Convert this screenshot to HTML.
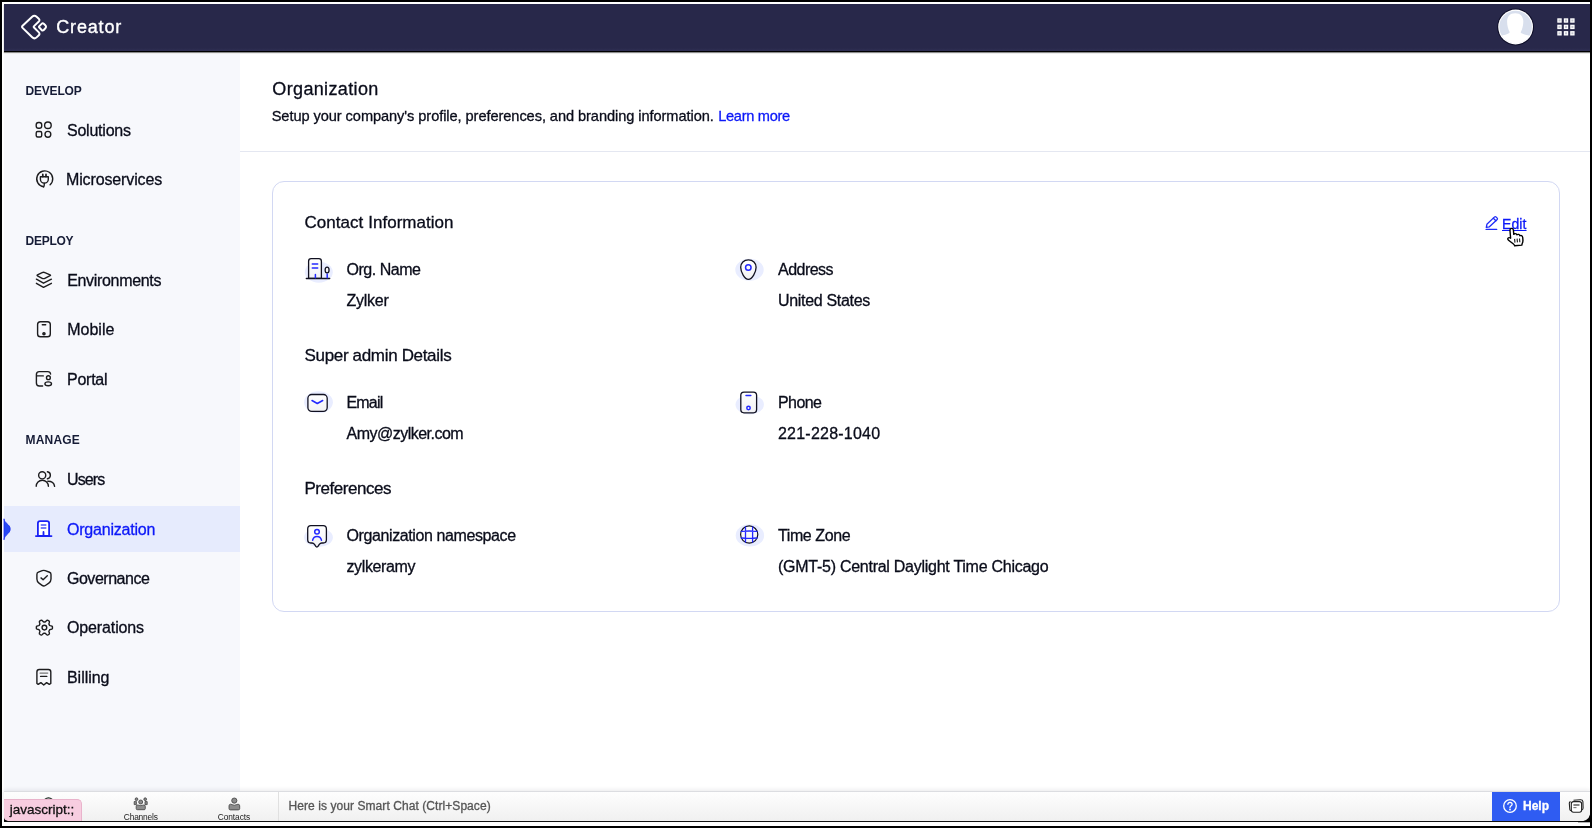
<!DOCTYPE html>
<html lang="en">
<head>
<meta charset="utf-8">
<title>Organization - Creator</title>
<style>
*{box-sizing:border-box;margin:0;padding:0}
html,body{width:1592px;height:828px;overflow:hidden;background:#000}
body{font-family:"Liberation Sans",sans-serif;color:#0d1226;position:relative}
#root{position:absolute;left:0;top:0;width:1592px;height:828px;will-change:transform}
.abs{position:absolute}
.t{position:absolute;white-space:nowrap;line-height:20px;height:20px;font-size:16px;color:#0a0c1a;-webkit-text-stroke:.3px currentColor}
#frame{left:2px;top:2px;width:1588px;height:824px;background:#fff;border-radius:0 0 10px 0}
#hdr{left:4px;top:4px;width:1586px;height:48px;background:linear-gradient(#28284a 0,#28284a 44px,#2e2e52 46.500px);border-bottom:1.300px solid #000;box-shadow:0 1px 1px rgba(0,0,0,.45)}
#side{left:4px;top:54px;width:236px;height:737px;background:#f7f8fc}
#divider{left:240px;top:151px;width:1350px;height:1px;background:#e4e7f1}
#card{left:272px;top:181px;width:1287.600px;height:431px;border:1px solid #d2d8f3;border-radius:12px;background:#fff}
.sec{font-size:12px;font-weight:bold;letter-spacing:-0.3px;color:#161c36;-webkit-text-stroke:0}
.nav{left:67px}
.h2{font-size:17px;line-height:24px;height:24px}
#active{left:4px;top:506px;width:236px;height:46px;background:#e6ebfd}
#activemark{left:4px;top:519px;width:6px;height:20px;background:#1a3cf5;border-radius:0 10px 10px 0/0 10px 10px 0}
.blue{color:#0c18f8}
#bbar{left:4px;top:791px;width:1586px;height:30px;background:linear-gradient(#fefefe,#f0f0f0);border-top:1px solid #dcdde1;box-shadow:0 -1px 4px rgba(40,40,60,.10)}
#bline{left:4px;top:821px;width:1584px;height:1px;background:#111}
#status{left:4px;top:799px;width:78px;height:22px;background:#f7cde0;border-radius:0 5px 0 0;border-top:1px solid #e9b3cb;border-right:1px solid #e9b3cb}
#help{left:1492px;top:792px;width:68px;height:29px;background:#2f5cf2}
svg{position:absolute;overflow:visible}
</style>
</head>
<body>
<div id="root">
<div class="abs" id="frame"></div>

<!-- header -->
<div class="abs" id="hdr"></div>
<div class="t" style="left:56.2px;top:15px;font-size:18px;line-height:24px;height:24px;color:#fff;letter-spacing:.85px;-webkit-text-stroke:.35px #fff">Creator</div>

<svg style="left:0;top:0" width="60" height="52" viewBox="0 0 60 52"><g fill="none" stroke="#fff" stroke-width="2" stroke-linejoin="round"><path d="M22.57 27.85Q21.5 26.8 22.59 25.77L32.17 16.76Q34.35 14.7 36.59 16.7L38.53 18.44Q40.4 20.1 38.58 21.82L34.03 26.11Q33.3 26.8 34.01 27.51L38.63 32.13Q40.4 33.9 38.55 35.58L36.57 37.38Q34.35 39.4 32.21 37.3Z"/><path d="M39.3 27.52Q38.6 26.8 39.32 26.1L41.63 23.85Q42.7 22.8 43.79 23.83L45.09 25.08Q46.9 26.8 45.13 28.57L43.76 29.94Q42.7 31 41.65 29.93Z"/></g></svg>
<svg style="left:1495px;top:7px" width="41" height="41" viewBox="0 0 41 41"><defs><clipPath id="avc"><circle cx="20.600" cy="20" r="16.300"/></clipPath></defs><circle cx="20.600" cy="20" r="18.400" fill="#0c0c26"/><circle cx="20.600" cy="20" r="17.400" fill="#fff"/><circle cx="20.600" cy="20" r="16.300" fill="#d8dfed"/><g clip-path="url(#avc)" fill="#fff"><path d="M20.200 6.300C25.500 6.300 28.300 9.800 28.300 14.500C28.300 18.500 27.300 22.600 25.600 25.200C26.600 26.800 29.500 27.400 33 28.300C36.500 29.200 38 30.500 38 33V41H3V33C3 30.500 4.500 29.200 8 28.300C11.500 27.400 13.800 26.800 14.800 25.200C13.100 22.600 12.100 18.500 12.100 14.500C12.100 9.800 14.900 6.300 20.200 6.300Z"/></g></svg>
<svg style="left:1557px;top:18px" width="18" height="19" viewBox="0 0 18 19"><g fill="#fff" stroke="#c9c9d2" stroke-width="0"><rect x="0.300" y="0.300" width="4.400" height="4.400"/><rect x="6.800" y="0.300" width="4.400" height="4.400"/><rect x="13.200" y="0.300" width="4.400" height="4.400"/><rect x="0.300" y="6.700" width="4.400" height="4.400"/><rect x="6.800" y="6.700" width="4.400" height="4.400"/><rect x="13.200" y="6.700" width="4.400" height="4.400"/><rect x="0.300" y="13.100" width="4.400" height="4.400"/><rect x="6.800" y="13.100" width="4.400" height="4.400"/><rect x="13.200" y="13.100" width="4.400" height="4.400"/></g><g fill="#c4c5cf"><rect x="1.50" y="1.50" width="2" height="2"/><rect x="8.00" y="1.50" width="2" height="2"/><rect x="14.40" y="1.50" width="2" height="2"/><rect x="1.50" y="7.90" width="2" height="2"/><rect x="8.00" y="7.90" width="2" height="2"/><rect x="14.40" y="7.90" width="2" height="2"/><rect x="1.50" y="14.30" width="2" height="2"/><rect x="8.00" y="14.30" width="2" height="2"/><rect x="14.40" y="14.30" width="2" height="2"/></g></svg>

<!-- sidebar -->
<div class="abs" id="side"></div>
<div class="abs" id="active"></div>
<svg style="left:0;top:0" width="20" height="828" viewBox="0 0 20 828"><path d="M4 518.800C4.300 523.500 10.200 524.300 10.200 529C10.200 533.900 4.300 534.700 4 539.800Z" fill="#2849f5" stroke="#1a2cf0" stroke-width=".800"/></svg>
<div class="t sec" style="left:25.5px;top:81px;letter-spacing:-.2px">DEVELOP</div>
<div class="t nav" style="top:120.8px;letter-spacing:-0.227px">Solutions</div>
<div class="t nav" style="left:66px;top:170.3px;letter-spacing:-0.13px">Microservices</div>
<div class="t sec" style="left:25.5px;top:231px;letter-spacing:-.25px">DEPLOY</div>
<div class="t nav" style="left:67.2px;top:270.8px;letter-spacing:-0.33px">Environments</div>
<div class="t nav" style="left:67.2px;top:320.3px;letter-spacing:0.02px">Mobile</div>
<div class="t nav" style="top:369.8px;letter-spacing:-0.25px">Portal</div>
<div class="t sec" style="left:25.5px;top:430.400px;letter-spacing:.2px">MANAGE</div>
<div class="t nav" style="top:470.3px;letter-spacing:-0.863px">Users</div>
<div class="t nav blue" style="top:519.8px;letter-spacing:-0.213px">Organization</div>
<div class="t nav" style="top:569.3px;letter-spacing:-0.485px">Governance</div>
<div class="t nav" style="top:618.3px;letter-spacing:-0.129px">Operations</div>
<div class="t nav" style="top:667.8px;letter-spacing:-0.05px">Billing</div>

<svg style="left:0;top:0" width="240" height="828" viewBox="0 0 240 828"><g fill="none" stroke="#1d1d1f" stroke-width="1.4" stroke-linecap="round" stroke-linejoin="round">
<rect x="36.2" y="122.500" width="5.500" height="5.800" rx="2.300"/><circle cx="47.9" cy="125.250" r="3.300"/><rect x="36.2" y="131.500" width="5.500" height="5.500" rx="1.500"/><circle cx="47.9" cy="134.300" r="2.900"/>
<path d="M43.6 186.800A8 8 0 1 1 50.1 184.800"/><path d="M40.4 176.800H48.300V179.200A3.950 3.950 0 0 1 40.400 179.200Z"/><path d="M42.800 174.400V176.600M46 174.400V176.600" stroke-width="1.700"/><path d="M44.300 183.300Q44.400 186.200 43.600 186.800"/>
<path d="M37.48 275.77Q36.6 275.3 37.5 274.87L42.15 272.65Q43.5 272 44.87 272.6L50.08 274.9Q51 275.3 50.1 275.74L44.85 278.34Q43.5 279 42.18 278.29Z"/><path d="M36.400 279.200L43.500 283.200L51.400 279.200M36.400 283.300L43.500 287.300L51.400 283.300"/>
<rect x="37.600" y="321.800" width="12.700" height="15" rx="2.800"/><path d="M42.300 324.700H45.700"/><circle cx="43.950" cy="333.700" r="1.100" fill="#555"/>
<path d="M42.600 386H39.300Q36.400 386 36.400 383.100V374.500Q36.400 371.600 39.300 371.600H47.800Q50.300 371.600 50.600 374"/><path d="M36.800 375.900H43.300"/><circle cx="48.400" cy="377.700" r="1.900"/><ellipse cx="48.200" cy="383.800" rx="3.300" ry="1.900"/>
<circle cx="42.200" cy="475.300" r="3.550"/><path d="M47.400 471.800A3.550 3.550 0 0 1 47.400 478.800"/><path d="M36.200 486.300A6.100 6.100 0 0 1 48.400 486.300"/><path d="M47.800 481.300Q54 481.300 54.600 486.300"/>
<path d="M42.21 570.69Q43.7 570.1 45.2 570.66L49.5 572.24Q51 572.8 51 574.4L51 579Q51 581.6 48.85 583.07L45.35 585.47Q43.7 586.6 42.09 585.42L38.99 583.14Q36.9 581.6 36.9 579L36.9 574.4Q36.9 572.8 38.39 572.21Z"/><path d="M41 577.900L43.100 579.700L47.300 575.800"/>
<path d="M52.45 627.6L52.43 628.13L52.38 628.65L51.88 629.09L51.02 629.37L50.15 629.55L49.62 629.76L49.47 630.1L49.29 630.43L49.1 630.74L48.88 631.04L48.96 631.6L49.24 632.44L49.43 633.34L49.3 633.99L48.87 634.29L48.42 634.57L47.96 634.82L47.48 635.04L46.85 634.83L46.17 634.22L45.58 633.55L45.14 633.2L44.77 633.24L44.4 633.25L44.03 633.24L43.66 633.2L43.22 633.55L42.63 634.22L41.95 634.83L41.32 635.04L40.84 634.82L40.38 634.57L39.93 634.29L39.5 633.99L39.37 633.34L39.56 632.44L39.84 631.6L39.92 631.04L39.7 630.74L39.51 630.43L39.33 630.1L39.18 629.76L38.65 629.55L37.78 629.37L36.92 629.09L36.42 628.65L36.37 628.13L36.35 627.6L36.37 627.07L36.42 626.55L36.92 626.11L37.78 625.83L38.65 625.65L39.18 625.44L39.33 625.1L39.51 624.77L39.7 624.46L39.92 624.16L39.84 623.6L39.56 622.76L39.37 621.86L39.5 621.21L39.93 620.91L40.37 620.63L40.84 620.38L41.32 620.16L41.95 620.37L42.63 620.98L43.22 621.65L43.66 622L44.03 621.96L44.4 621.95L44.77 621.96L45.14 622L45.58 621.65L46.17 620.98L46.85 620.37L47.48 620.16L47.96 620.38L48.42 620.63L48.87 620.91L49.3 621.21L49.43 621.86L49.24 622.76L48.96 623.6L48.88 624.16L49.1 624.46L49.29 624.77L49.47 625.1L49.62 625.44L50.15 625.65L51.02 625.83L51.88 626.11L52.38 626.55L52.43 627.07Z"/><circle cx="44.400" cy="627.600" r="2.350"/>
<path d="M36.9 683.5V671.9Q36.9 669.5 39.3 669.5H48.4Q50.8 669.5 50.8 671.9V683.5L49.3 684.4L46.6 682.6L43.75 685L40.9 682.6L38.2 684.4Z"/><path d="M40.100 673.100H47.700" stroke="#777"/><path d="M40.600 676.400H46.800"/>
</g>
<g fill="#fff" stroke="#1a22f5" stroke-width="1.800" stroke-linecap="round" stroke-linejoin="round"><path d="M37.900 536V523.300Q37.900 521.100 40.100 521.100H46.900Q49.100 521.100 49.100 523.300V536Z"/><path d="M35.900 536.100H51.500M43.500 532V536" fill="none"/><path d="M41.300 525H45.800M41.300 527.900H45.800" stroke-width="1.500" stroke="#4a55f7" fill="none"/></g>
</svg>

<!-- main -->
<div class="t" style="left:272.3px;top:77px;font-size:18px;line-height:24px;height:24px;letter-spacing:.36px">Organization</div>
<div class="t" style="left:271.700px;top:106px;font-size:14.6px;letter-spacing:-.066px">Setup your company's profile, preferences, and branding information. <span class="blue" style="letter-spacing:-.3px;margin-left:.5px">Learn more</span></div>
<div class="abs" id="divider"></div>
<div class="abs" id="card"></div>

<svg style="left:0;top:0" width="1592" height="828" viewBox="0 0 1592 828"><defs><linearGradient id="ig" x1="0" y1="0" x2="0" y2="1"><stop offset="0" stop-color="#fff"/><stop offset="1" stop-color="#f1f1f4"/></linearGradient></defs>
<g fill="#e9edff"><ellipse cx="318.800" cy="272.200" rx="14" ry="10.500"/><ellipse cx="749.500" cy="269.700" rx="14.200" ry="11"/><ellipse cx="318.500" cy="402.200" rx="14.400" ry="11"/><ellipse cx="749.700" cy="404.600" rx="14.200" ry="9.800"/><ellipse cx="318.500" cy="537.500" rx="14.400" ry="9.400"/><ellipse cx="749.900" cy="535.400" rx="14.200" ry="11.200"/></g>
<g fill="url(#ig)" stroke="#101020" stroke-width="1.300" stroke-linecap="round" stroke-linejoin="round">
<path d="M308.600 278.400V261.200Q308.600 258.700 311.100 258.700H318.900Q321.400 258.700 321.400 261.200V278.400Z"/><ellipse cx="327.100" cy="270.100" rx="1.950" ry="2.900"/><path d="M306.300 278.500H329.700" fill="none"/>
<path d="M748.400 259.800C753 259.800 756.100 263 756.100 267.300C756.100 272 752.200 279.300 748.400 279.300C744.600 279.300 740.700 272 740.700 267.300C740.700 263 743.800 259.800 748.400 259.800Z"/>
<rect x="307.900" y="394.500" width="19.300" height="16.900" rx="3.800"/>
<rect x="740.800" y="392.100" width="15.800" height="20.700" rx="3.200"/>
<path d="M310.900 525.700H323.200Q326.400 525.700 326.400 528.900V539.800Q326.400 543 323.200 543H321.800Q320.300 543 319.300 544.400Q317.800 547.100 316.900 547.100Q316 547.100 314.500 544.400Q313.500 543 312 543H310.900Q307.700 543 307.700 539.800V528.900Q307.700 525.700 310.900 525.700Z"/>
<circle cx="749.200" cy="534.550" r="8.600" stroke-width="1.200"/>
</g>
<g fill="none" stroke="#2328ff" stroke-width="1.500" stroke-linecap="round" stroke-linejoin="round">
<path d="M312.300 264.100H317.700M312.300 268H317.700M315.400 274.500V277.700M327.200 274.200V277.700"/>
<circle cx="748.300" cy="267.400" r="2.750"/>
<path d="M312 400.500L317.300 403.500L322.700 400.500"/>
<path d="M746 395.600H750.800"/><circle cx="748.500" cy="408" r="1.700"/>
<circle cx="317" cy="531.800" r="2.300"/><path d="M312.600 540.300Q313.500 536.600 317 536.600Q320.600 536.600 321.500 540.300"/>
<path d="M741.400 531.400Q749.200 530.600 757 531.400M741.400 538Q749.200 538.800 757 538M745.500 527V542M752.600 526.900V542.100" stroke-width="1.300"/>
</g>
</svg>

<div class="t h2" style="left:304.5px;top:211.4px;letter-spacing:.04px">Contact Information</div>
<div class="t" style="left:346.5px;top:260px;letter-spacing:-0.474px">Org. Name</div>
<div class="t" style="left:346.5px;top:291px;letter-spacing:-0.253px">Zylker</div>
<div class="t" style="left:778px;top:260px;letter-spacing:-0.524px">Address</div>
<div class="t" style="left:778px;top:291px;letter-spacing:-0.312px">United States</div>

<div class="t h2" style="left:304.5px;top:344.4px;letter-spacing:-.33px">Super admin Details</div>
<div class="t" style="left:346.5px;top:393px;letter-spacing:-0.820px">Email</div>
<div class="t" style="left:346.5px;top:424px;letter-spacing:-0.513px">Amy@zylker.com</div>
<div class="t" style="left:778px;top:393px;letter-spacing:-0.579px">Phone</div>
<div class="t" style="left:778px;top:424px;letter-spacing:0.221px">221-228-1040</div>

<div class="t h2" style="left:304.5px;top:477.4px;letter-spacing:-.47px">Preferences</div>
<div class="t" style="left:346.5px;top:526px;letter-spacing:-0.395px">Organization namespace</div>
<div class="t" style="left:346.5px;top:557px;letter-spacing:-0.380px">zylkeramy</div>
<div class="t" style="left:778px;top:526px;letter-spacing:-0.407px">Time Zone</div>
<div class="t" style="left:778px;top:557px;letter-spacing:-0.263px">(GMT-5) Central Daylight Time Chicago</div>

<div class="t blue" style="left:1502px;top:213.500px;font-size:14px;text-decoration:underline;text-underline-offset:.600px;text-decoration-thickness:1.200px;letter-spacing:.1px">Edit</div>
<svg style="left:0;top:0" width="1592" height="828" viewBox="0 0 1592 828"><g fill="none" stroke="#1f2bf7" stroke-width="1.300" stroke-linecap="round" stroke-linejoin="round"><path d="M1486.300 227.300L1486.900 224.300L1494.600 216.900Q1495.300 216.300 1496 216.900L1497.200 218.100Q1497.800 218.800 1497.200 219.500L1489.400 226.800Z"/><path d="M1493.300 218.200L1495.900 220.800"/><path d="M1486.100 229.400H1496.700"/></g>
<g transform="translate(1506.200,228.100) rotate(-5 5.2 0.3) scale(1.120,1.040)"><path d="M4.600 0.300C5.700 0.300 6.300 1.100 6.300 2.200V6.200C6.600 5.700 7.300 5.500 7.900 5.700C8.600 5.900 8.900 6.400 9 6.900C9.400 6.500 10.100 6.400 10.700 6.700C11.300 7 11.500 7.500 11.600 8C12 7.800 12.600 7.800 13.100 8.100C13.800 8.500 14 9.200 14 10V12.200C14 13.800 13.600 14.700 13.100 15.600C12.800 16.200 12.700 16.600 12.700 17.200H6.200C6.100 16.400 5.700 15.800 5 15.100L1.200 11.300C0.500 10.600 0.400 9.800 0.900 9.300C1.500 8.700 2.300 8.800 3 9.400L3.200 9.600V2.200C3.200 1.100 3.700 0.300 4.600 0.300Z" fill="#fff" stroke="#000" stroke-width="1.250" stroke-linejoin="round"/><path d="M6.700 10.600V14.200M8.900 10.600V14.200M11.100 10.600V14.200" stroke="#000" stroke-width=".900" fill="none"/></g></svg>


<!-- bottom bar -->
<div class="abs" id="bbar"></div>
<div class="abs" id="bline"></div>
<div class="abs" style="left:278px;top:792px;width:1px;height:29px;background:#e0e0e0"></div>
<div class="t" style="left:123.800px;top:806.600px;font-size:8.400px;letter-spacing:-.18px;color:#222;-webkit-text-stroke:0">Channels</div>
<div class="t" style="left:217.800px;top:806.600px;font-size:8.400px;letter-spacing:-.1px;color:#222;-webkit-text-stroke:0">Contacts</div>
<div class="t" style="left:288.5px;top:796px;font-size:12px;letter-spacing:.07px;color:#555">Here is your Smart Chat (Ctrl+Space)</div>
<div class="abs" id="help"></div>
<div class="t" style="left:1523px;top:796px;font-size:12px;font-weight:bold;color:#fff">Help</div>
<svg style="left:0;top:0" width="1592" height="828" viewBox="0 0 1592 828">
<circle cx="48.500" cy="802.600" r="4.700" fill="none" stroke="#1b2620" stroke-width="1.300"/>
<g fill="#8c8c8c" stroke="#3f3f3f" stroke-width=".800" stroke-linejoin="round">
<circle cx="136.500" cy="799.200" r="1.350"/><circle cx="145.200" cy="799.200" r="1.350"/>
<path d="M134.200 801.600Q135.300 801 136.400 801.500V804.600H134.200Z"/><path d="M147.200 801.600Q146.100 801 145 801.500V804.600H147.200Z"/>
<circle cx="140.700" cy="802" r="2"/>
<path d="M136.200 806.300Q136.200 805 137.500 805Q140.700 806.200 143.900 805Q145.300 805 145.300 806.300V808.600Q145.300 809.700 144.200 809.700H137.300Q136.200 809.700 136.200 808.600Z"/>
<circle cx="234.300" cy="800.600" r="2.600"/>
<path d="M229 805.900Q229 804.300 230.600 804.200Q234.300 806.300 238.100 804.200Q239.700 804.300 239.700 805.900V808.500Q239.700 809.900 238.300 809.900H230.400Q229 809.900 229 808.500Z"/>
</g></svg>
<div class="abs" id="status"></div>
<svg style="left:0;top:0" width="1592" height="828" viewBox="0 0 1592 828"><g fill="none" stroke="#fff" stroke-width="1.300" stroke-linecap="round" stroke-linejoin="round"><circle cx="1510" cy="806" r="6.300"/><path d="M1507.900 804.300Q1508 802.400 1510 802.400Q1512.100 802.500 1512.100 804.200Q1512.100 805.300 1510.900 806Q1510 806.600 1510 807.500"/></g><circle cx="1510" cy="809.500" r=".900" fill="#fff"/>
<g fill="#fff" stroke="#222" stroke-width="1.100" stroke-linejoin="round"><path d="M1570.600 801.600Q1569.200 801.900 1569.300 803.300L1569.800 809.300Q1570 810.600 1571.300 810.800"/><path d="M1573.500 800.200L1580.300 799.700Q1582.700 799.600 1582.900 801.600L1583.100 808.100Q1583.100 809.600 1581.700 810"/><rect x="1571.300" y="801.600" width="10.300" height="10.600" rx="2.200"/><path d="M1573.400 805H1579.500" fill="none"/><path d="M1573.400 807.600H1576.500" fill="none" stroke="#777"/></g>
<path d="M1590 814.500V826H1578V821.600Q1588.500 821.600 1590 814.500Z" fill="#000"/><rect x="1578" y="822.300" width="12" height="3.700" fill="#fff"/>
<path d="M4 821.500V817.500Q4.300 820.300 7.500 820.700V821.500Z" fill="#000"/>
</svg>

<div class="t" style="left:9.8px;top:800px;font-size:13.5px;color:#111">javascript:;</div>
</div>
</body>
</html>
